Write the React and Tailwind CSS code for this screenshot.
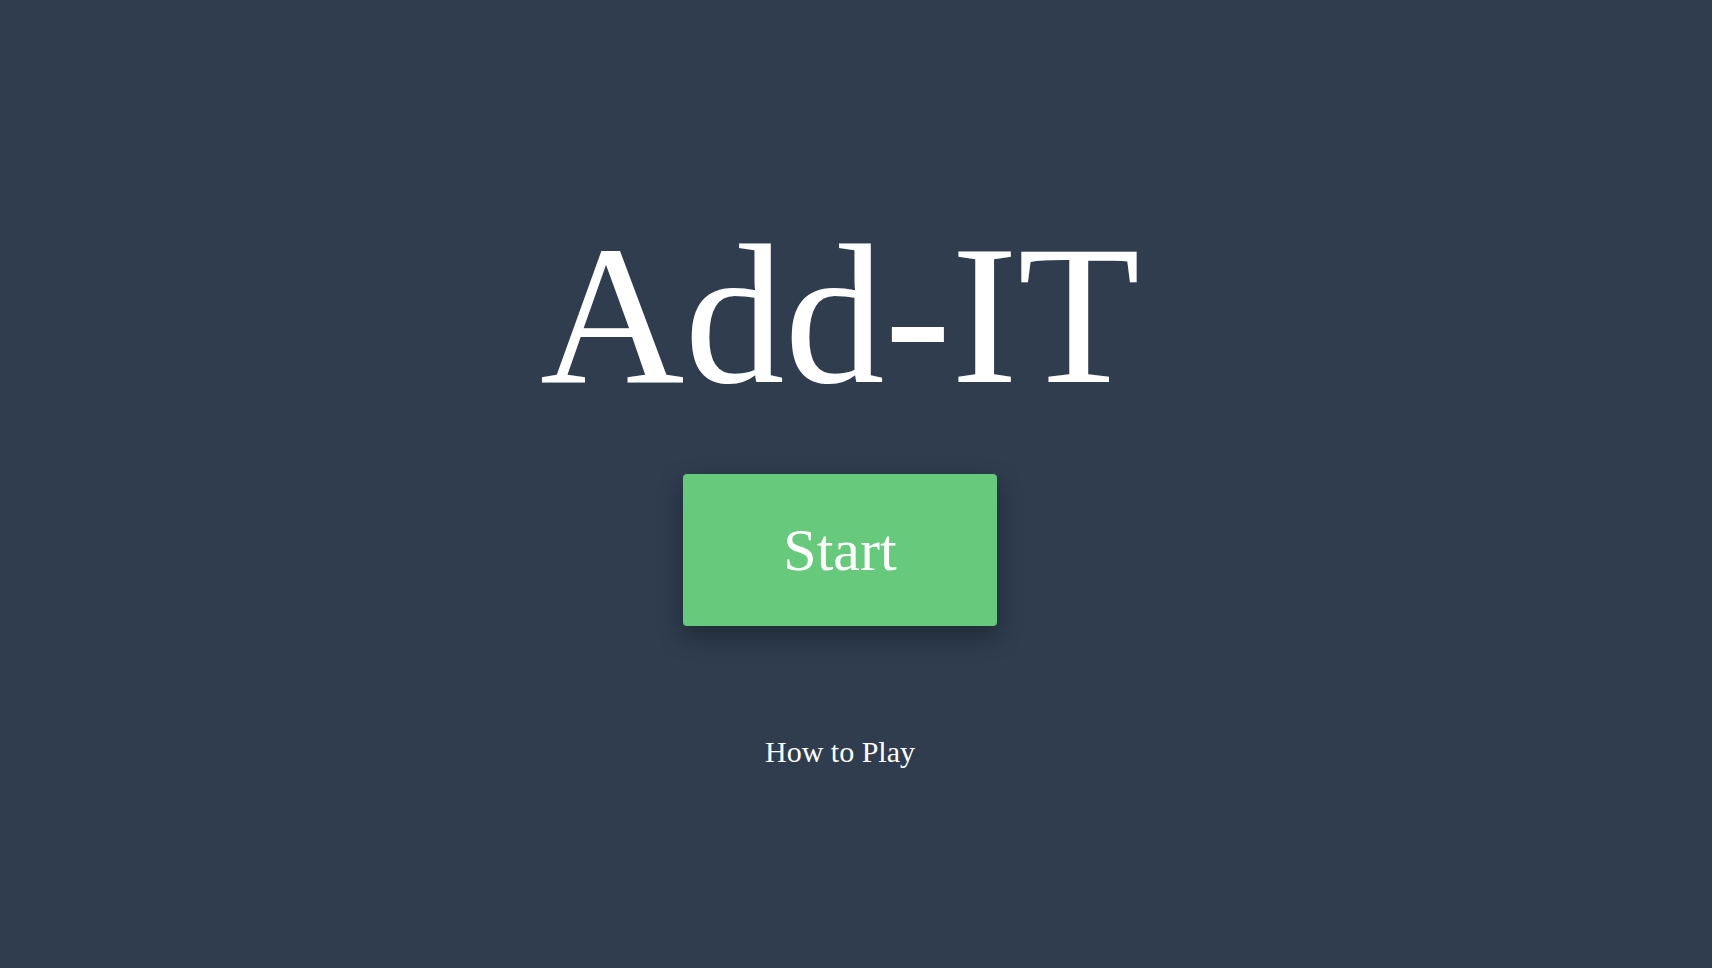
export default function App() {
  return (
    <div
      className="w-full h-[968px] bg-[#2f3d4f] flex flex-col items-center pr-[32px] text-white"
      style={{ fontFamily: '"Liberation Serif", "Times New Roman", serif' }}
    >
      <h1 className="mt-[215px] text-[200px] leading-none font-normal">Add-IT</h1>
      <button className="mt-[59px] w-[314px] h-[152px] bg-[#66c97c] rounded-[4px] text-[60px] leading-none text-white shadow-[0_10px_24px_rgba(0,0,0,0.35)]">
        Start
      </button>
      <div className="mt-[111px] text-[30px] leading-none">How to Play</div>
    </div>
  );
}
